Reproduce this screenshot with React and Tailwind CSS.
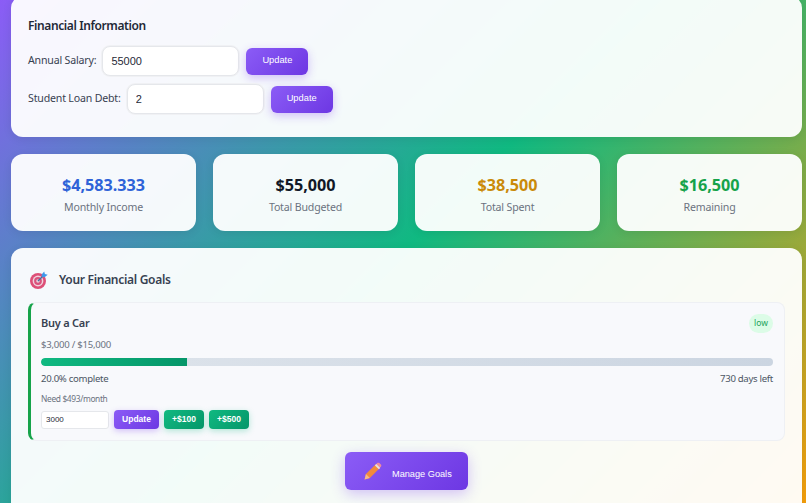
const BUTTON = "font-['Liberation_Sans',sans-serif] text-white bg-[linear-gradient(135deg,#8b5cf6,#6d37e3)]";

function TargetIcon() {
  return (
    <svg viewBox="0 0 18 18" className="w-[18px] h-[18px] shrink-0">
      <circle cx="8" cy="10" r="8" fill="#dd4f77" />
      <circle cx="8" cy="10" r="5.4" fill="#efd3dd" />
      <circle cx="8" cy="10" r="3.9" fill="#d9527c" />
      <circle cx="8" cy="10" r="1.8" fill="#eacbd6" />
      <path d="M8 10 14 4" stroke="#3f6f9f" strokeWidth="1.3" />
      <path d="M11.6 3.6 14.2.4l.7 2.7 2.8.6-3.1 2.6-2.8-.5z" fill="#3f98ea" />
    </svg>
  );
}

function PencilIcon() {
  return (
    <svg viewBox="0 0 18 18" className="w-[18px] h-[18px] shrink-0">
      <path d="M.6 17.4l1.3-5.4L11.8 2.2l4 3.8-9.9 9.9z" fill="#f28a3c" />
      <path d="M.6 17.4l1.3-5.4 4 3.9z" fill="#f6b98a" />
      <path d="M11.4 3l1.8-1.9c.6-.6 1.5-.6 2.1 0l1.6 1.5c.6.6.6 1.5 0 2.1l-1.8 1.9z" fill="#ee8d9d" />
      <path d="M10.9 3.4l1.3-1.3 4 3.8-1.3 1.3z" fill="#e6e0e4" />
    </svg>
  );
}

function InfoRow({ label, value }) {
  return (
    <div className="flex items-center h-[30px] mb-2">
      <label className="text-[10.6px] tracking-[-0.18px] text-[#374151] mr-[6px]">{label}</label>
      <input
        readOnly
        value={value}
        className="w-[137px] h-[30px] px-[8px] rounded-lg border border-[#e5e7eb] bg-white text-[11px] text-[#1f2937] font-['Liberation_Sans',sans-serif] outline-none shadow-[0_0_0_1px_#f0f1f4]"
      />
      <button className={`${BUTTON} ml-[7px] w-[62px] h-[27px] rounded-md text-[9.3px] font-medium shadow-[0_3px_10px_rgba(124,58,237,0.3)]`}>
        Update
      </button>
    </div>
  );
}

function Stat({ value, label, color }) {
  return (
    <div className="h-[77px] rounded-xl bg-white/95 flex flex-col items-center pt-[19px] shadow-[0_2px_10px_rgba(0,0,0,0.08)]">
      <div className={`text-[16.2px] leading-[24px] font-bold ${color}`}>{value}</div>
      <div className="text-[10.6px] tracking-[-0.17px] leading-[18px] mt-[1px] text-[#6b7280]">{label}</div>
    </div>
  );
}

export default function App() {
  return (
    <div className="h-[503px] w-[806px] overflow-hidden pl-[11px] pr-[4px] font-['Noto_Sans',sans-serif] bg-[linear-gradient(135deg,#8b5cf6_0%,#10b981_50%,#f59e0b_100%)]">
      <section className="-mt-[4px] h-[141px] rounded-xl bg-white/95 pl-[17px] pt-[20px] shadow-[0_2px_10px_rgba(0,0,0,0.08)]">
        <h2 className="text-[12px] tracking-[-0.4px] leading-[20px] font-semibold text-[#1f2937] mb-[10px]">Financial Information</h2>
        <InfoRow label="Annual Salary:" value="55000" />
        <InfoRow label="Student Loan Debt:" value="2" />
      </section>

      <div className="grid grid-cols-4 gap-[17px] mt-[17px]">
        <Stat value="$4,583.333" label="Monthly Income" color="text-[#2f63d8]" />
        <Stat value="$55,000" label="Total Budgeted" color="text-[#111827]" />
        <Stat value="$38,500" label="Total Spent" color="text-[#ca8a0a]" />
        <Stat value="$16,500" label="Remaining" color="text-[#16a34a]" />
      </div>

      <section className="mt-[17px] h-[270px] rounded-xl bg-white/95 px-[17px] pt-[22px] shadow-[0_2px_10px_rgba(0,0,0,0.08)]">
        <div className="flex items-center h-[20px] pl-[2px] mb-[12px]">
          <TargetIcon />
          <h3 className="ml-[11px] text-[12px] tracking-[-0.3px] font-semibold text-[#374151]">Your Financial Goals</h3>
        </div>

        <div className="h-[139px] rounded-lg border border-[#eef0f4] border-l-[3px] border-l-[#16a34a] bg-[#f8f9fc] pl-[10px] pr-[11px] pt-[10px]">
          <div className="flex items-center justify-between h-[20px]">
            <span className="text-[11px] tracking-[-0.25px] font-semibold text-[#374151]">Buy a Car</span>
            <span className="w-[24px] h-[19px] rounded-full bg-[#dcfce7] text-[#22a35a] text-[8.5px] flex items-center justify-center">low</span>
          </div>
          <div className="mt-[4px] text-[9.6px] tracking-[-0.25px] leading-[16px] text-[#6b7280]">$3,000 / $15,000</div>
          <div className="mt-[5px] h-[8px] rounded-full bg-[linear-gradient(90deg,#dfe5ec,#cbd5e1)] overflow-hidden">
            <div className="h-full w-[20%] rounded-l-full bg-[linear-gradient(90deg,#10b981,#059669)]" />
          </div>
          <div className="flex justify-between mt-[5px] text-[9.6px] tracking-[-0.3px] leading-[16px] text-[#4b5563]">
            <span>20.0% complete</span>
            <span>730 days left</span>
          </div>
          <div className="mt-[5px] text-[8.4px] tracking-[-0.35px] leading-[13px] text-[#6b7280]">Need $493/month</div>
          <div className="flex items-center mt-[5px] font-['Liberation_Sans',sans-serif]">
            <input
              readOnly
              value="3000"
              className="w-[68px] h-[18px] px-[4px] rounded-[3px] border border-[#e5e7eb] bg-white text-[8px] text-[#1f2937] outline-none"
            />
            <button className={`${BUTTON} ml-[5px] w-[45px] h-[19px] rounded-[4px] text-[8.5px] font-bold shadow-[0_2px_6px_rgba(124,58,237,0.3)]`}>
              Update
            </button>
            <button className="ml-[5px] w-[40px] h-[19px] rounded-[4px] text-[8.5px] font-bold text-white bg-[linear-gradient(135deg,#10b981,#059669)] shadow-[0_2px_6px_rgba(16,185,129,0.3)]">
              +$100
            </button>
            <button className="ml-[5px] w-[40px] h-[19px] rounded-[4px] text-[8.5px] font-bold text-white bg-[linear-gradient(135deg,#10b981,#059669)] shadow-[0_2px_6px_rgba(16,185,129,0.3)]">
              +$500
            </button>
          </div>
        </div>

        <div className="flex justify-center mt-[11px]">
          <button className={`${BUTTON} w-[123px] h-[38px] pl-[19px] rounded-md flex items-center text-[9.2px] font-medium shadow-[0_4px_14px_rgba(124,58,237,0.3)]`}>
            <PencilIcon />
            <span className="ml-[10px] mt-[8px]">Manage Goals</span>
          </button>
        </div>
      </section>
    </div>
  );
}
